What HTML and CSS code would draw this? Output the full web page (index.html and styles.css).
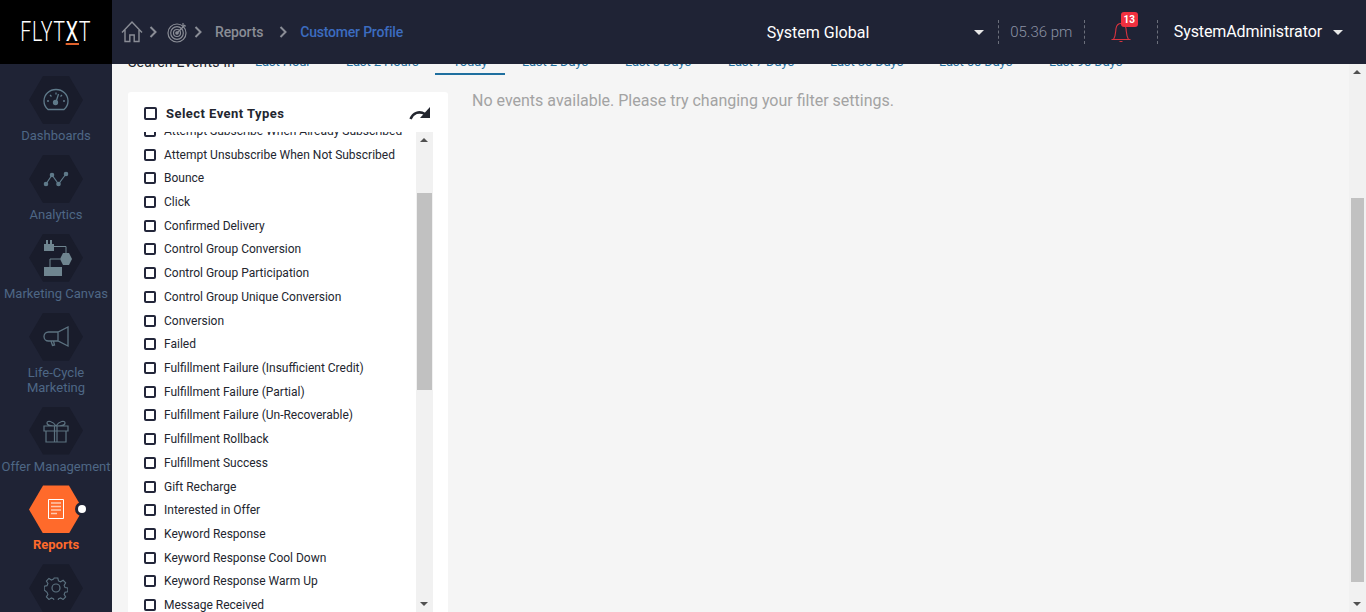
FILE: index.html
```html
<!DOCTYPE html>
<html lang="en">
<head>
    <meta charset="UTF-8">
    <title>Customer Profile</title>
    <link rel="stylesheet" href="styles.css">
</head>
<body>
    <header class="topbar">
        <div class="logo"><span class="logo-text">FLYT<span class="logo-x">X</span>T</span></div>
        <nav class="crumbs">
            <svg class="crumb-home" width="22" height="22" viewBox="0 0 22 22" fill="none" stroke="#8a8d96" stroke-width="1.400"><path d="M1 11.500 11 1l10 10.500M4 9v11.500h4.800v-6.500h4.400v6.500H18V9"/></svg>
            <svg class="chev" width="9" height="12" viewBox="0 0 9 12" fill="none" stroke="#8a8d96" stroke-width="2"><path d="M1.500 1 6.500 6l-5 5"/></svg>
            <svg class="crumb-target" width="21" height="21" viewBox="0 0 21 21" fill="none" stroke="#8a8d96" stroke-width="1.200"><circle cx="10" cy="11" r="9"/><circle cx="10" cy="11" r="6.300"/><circle cx="10" cy="11" r="3.500"/><circle cx="10" cy="11" r="1.200" fill="#8a8d96"/><path d="M10 11 18 3M16 1v3h3"/></svg>
            <svg class="chev" width="9" height="12" viewBox="0 0 9 12" fill="none" stroke="#8a8d96" stroke-width="2"><path d="M1.500 1 6.500 6l-5 5"/></svg>
            <span class="crumb-text">Reports</span>
            <svg class="chev chev-wide" width="9" height="12" viewBox="0 0 9 12" fill="none" stroke="#8a8d96" stroke-width="2"><path d="M1.500 1 6.500 6l-5 5"/></svg>
            <span class="crumb-current">Customer Profile</span>
        </nav>
        <div class="top-right">
            <div class="context">System Global</div>
            <span class="caret caret-context"></span>
            <div class="clock">05.36 pm</div>
            <div class="bell">
                <svg width="22" height="24" viewBox="0 0 22 24" fill="none" stroke="#d8333f" stroke-width="1.100"><path d="M1.500 19.500h19M3.500 19.500C6 15 5.500 12 6 8.500 6.500 5.500 8.500 3.500 11 3.500s4.500 2 5 5c.5 3.500 0 6.500 2.500 11M9.500 21.500h3"/></svg>
                <span class="badge">13</span>
            </div>
            <div class="user">SystemAdministrator</div>
            <span class="caret"></span>
        </div>
    </header>
    <div class="layout">
        <aside class="sidebar">
            <a class="side-item">
                <span class="hex"><svg width="26" height="24" viewBox="0 0 26 24" fill="none" stroke="#5f7a8a" stroke-width="1.300"><path d="M5 21.500C2.500 19.500 1 16.500 1 13 1 6.500 6.500 1.500 13 1.500S25 6.500 25 13c0 3.500-1.500 6.500-4 8.500zM4 13h2M20 13h2M7 7l1.500 1.500M19 7l-1.500 1.500M13 4.500v2"/><circle cx="12.500" cy="14.500" r="2" fill="#5f7a8a"/><path d="M13 14l2.500-8"/></svg></span>
                <span class="side-label">Dashboards</span>
            </a>
            <a class="side-item">
                <span class="hex"><svg width="26" height="16" viewBox="0 0 26 16" fill="#5f7a8a" stroke="#5f7a8a" stroke-width="1.200"><path d="M3 13 9 4l6.500 9L23 3" fill="none"/><circle cx="3" cy="13" r="1.700"/><circle cx="9" cy="4" r="1.700"/><circle cx="15.500" cy="13" r="1.700"/><circle cx="23" cy="3" r="1.700"/></svg></span>
                <span class="side-label">Analytics</span>
            </a>
            <a class="side-item">
                <span class="hex"><svg width="32" height="40" viewBox="0 0 32 40" fill="#6f8590"><path d="M6 2h2v4h2V2h2v4h2v7H4V6h2z"/><path d="M14 8.500h12V16M20 21H10v8" fill="none" stroke="#6f8590"/><path d="M23 15h6l3 6-3 6h-6l-3-6z"/><path d="M4 29h18v9H4z"/></svg></span>
                <span class="side-label">Marketing Canvas</span>
            </a>
            <a class="side-item">
                <span class="hex"><svg width="26" height="22" viewBox="0 0 26 22" fill="none" stroke="#5c7280" stroke-width="1.300"><path d="M25 1v19l-10-5H5.500a4.500 4.500 0 0 1 0-9H15zM15 6v9M8 15l1.500 4.500 2-.5-1-4"/></svg></span>
                <span class="side-label">Life-Cycle<br>Marketing</span>
            </a>
            <a class="side-item">
                <span class="hex"><svg width="26" height="24" viewBox="0 0 26 24" fill="none" stroke="#5c7280" stroke-width="1.200"><path d="M1 7h24v5H1zM3 12v11h20V12M14 7v16M11.500 7v16M13 7c3-5 9-6 9-3s-5 3-9 3c-4 0-9 0-9-3s6-2 9 3"/></svg></span>
                <span class="side-label">Offer Management</span>
            </a>
            <a class="side-item side-active">
                <span class="hex"><svg width="16" height="20" viewBox="0 0 16 20" fill="none" stroke="#fff"><path d="M.5.500h15v19H.5z"/><path d="M3 4h10M3 7.500h10M3 11h10M3 14.500h6" stroke="#ffc9b0" stroke-width="1.500"/></svg></span>
                <span class="active-dot"></span>
                <span class="side-label">Reports</span>
            </a>
            <a class="side-item">
                <span class="hex"><svg width="24" height="24" viewBox="0 0 24 24" fill="none" stroke="#5c7280" stroke-width="1.200"><path d="M10 1h4l.7 3.200 2.300 1 2.800-1.700 2.800 2.800-1.700 2.800 1 2.300 3.100.6v4l-3.100.7-1 2.300 1.700 2.800-2.800 2.800-2.800-1.700-2.300 1-.7 3.100h-4l-.7-3.100-2.300-1-2.800 1.700-2.800-2.800 1.700-2.800-1-2.300L-1 14v-4l3.100-.6 1-2.300-1.700-2.800 2.800-2.800 2.800 1.700 2.300-1z" transform="translate(1.100 1.100) scale(.91)"/><circle cx="12" cy="12" r="4"/></svg></span>
            </a>
        </aside>
        <main class="main">
            <div class="page">
                <div class="tabs">
                    <span class="tabs-title">Search Events in</span>
                    <a class="tab tab-hour">Last Hour</a>
                    <a class="tab tab-2h">Last 2 Hours</a>
                    <a class="tab tab-active">Today</a>
                    <a class="tab tab-2d">Last 2 Days</a>
                    <a class="tab tab-3d">Last 3 Days</a>
                    <a class="tab tab-7d">Last 7 Days</a>
                    <a class="tab tab-30d">Last 30 Days</a>
                    <a class="tab tab-60d">Last 60 Days</a>
                    <a class="tab">Last 90 Days</a>
                </div>
                <div class="content">
                    <section class="filter">
                        <div class="filter-head">
                            <span class="box box-head"></span>
                            <span class="filter-title">Select Event Types</span>
                            <svg class="reset" width="21" height="13" viewBox="0 0 21 13" fill="#23262f"><path d="M1.500 12C4 6 10 3.500 16 7" fill="none" stroke="#23262f" stroke-width="2.500"/><path d="M21 0v11H11z"/></svg>
                        </div>
                        <div class="filter-body">
                            <ul class="events">
                                <li><span class="box"></span>Attempt Subscribe When Already Subscribed</li>
                                <li><span class="box"></span>Attempt Unsubscribe When Not Subscribed</li>
                                <li><span class="box"></span>Bounce</li>
                                <li><span class="box"></span>Click</li>
                                <li><span class="box"></span>Confirmed Delivery</li>
                                <li><span class="box"></span>Control Group Conversion</li>
                                <li><span class="box"></span>Control Group Participation</li>
                                <li><span class="box"></span>Control Group Unique Conversion</li>
                                <li><span class="box"></span>Conversion</li>
                                <li><span class="box"></span>Failed</li>
                                <li><span class="box"></span>Fulfillment Failure (Insufficient Credit)</li>
                                <li><span class="box"></span>Fulfillment Failure (Partial)</li>
                                <li><span class="box"></span>Fulfillment Failure (Un-Recoverable)</li>
                                <li><span class="box"></span>Fulfillment Rollback</li>
                                <li><span class="box"></span>Fulfillment Success</li>
                                <li><span class="box"></span>Gift Recharge</li>
                                <li><span class="box"></span>Interested in Offer</li>
                                <li><span class="box"></span>Keyword Response</li>
                                <li><span class="box"></span>Keyword Response Cool Down</li>
                                <li><span class="box"></span>Keyword Response Warm Up</li>
                                <li><span class="box"></span>Message Received</li>
                            </ul>
                            <div class="scrollbar scrollbar-list">
                                <span class="arrow-up"></span>
                                <span class="thumb"></span>
                                <span class="arrow-down"></span>
                            </div>
                        </div>
                    </section>
                    <p class="empty">No events available. Please try changing your filter settings.</p>
                </div>
            </div>
            <div class="scrollbar scrollbar-page">
                <span class="arrow-up"></span>
                <span class="thumb"></span>
                <span class="arrow-down"></span>
            </div>
        </main>
    </div>
</body>
</html>
```
FILE: styles.css
```css
* {
    box-sizing: border-box;
}
html, body {
    height: 100%;
}
body {
    margin: 0;
    font-family: Roboto, "Liberation Sans", sans-serif;
    background-color: #f5f5f5;
    overflow: hidden;
}
.topbar {
    display: flex;
    align-items: center;
    height: 64px;
    background-color: #1f2335;
}
.logo {
    flex: none;
    width: 112px;
    height: 64px;
    line-height: 64px;
    text-align: center;
    background-color: #000;
    color: #fff;
    font-size: 28px;
    font-weight: 300;
}
.logo-text {
    display: inline-block;
    line-height: 22px;
    letter-spacing: 1px;
    transform: scaleX(.7);
}
.logo-x {
    display: inline-block;
    font-weight: 400;
    border-bottom: 2px solid #e0622b;
}
.crumbs {
    display: flex;
    align-items: center;
    padding-left: 9px;
}
.chev {
    margin-left: 6px;
}
.crumb-target {
    margin-left: 9px;
}
.crumb-text {
    margin-left: 12px;
    font-size: 14px;
    font-weight: 500;
    letter-spacing: -.15px;
    color: #8a8d96;
}
.chev-wide {
    margin-left: 16px;
}
.crumb-current {
    margin-left: 12px;
    font-size: 14px;
    font-weight: 500;
    letter-spacing: -.2px;
    color: #3c6cc0;
}
.top-right {
    display: flex;
    align-items: center;
    margin-left: auto;
    color: #fff;
    font-size: 16px;
}
.context {
    width: 196px;
}
.caret {
    display: inline-block;
    margin-left: 11px;
    margin-right: 23px;
    border-top: 5px solid #e8e8e8;
    border-left: 5px solid transparent;
    border-right: 5px solid transparent;
}
.caret-context {
    margin-right: 14px;
}
.clock {
    width: 87px;
    height: 24px;
    line-height: 24px;
    text-align: center;
    font-weight: 300;
    font-size: 15px;
    color: #8b92a4;
    border-left: 1px dashed #6b6f7b;
    border-right: 1px dashed #6b6f7b;
}
.bell {
    position: relative;
    width: 72px;
    height: 24px;
    text-align: center;
}
.badge {
    position: absolute;
    top: -8px;
    left: 36px;
    width: 17px;
    height: 15px;
    line-height: 15px;
    border-radius: 3px;
    background-color: #f0303f;
    font-size: 10px;
    font-weight: 700;
    text-align: center;
}
.user {
    height: 24px;
    line-height: 24px;
    padding-left: 16px;
    letter-spacing: -.1px;
    border-left: 1px dashed #6b6f7b;
}
.layout {
    display: flex;
    height: 548px;
}
.sidebar {
    flex: none;
    width: 112px;
    padding-top: 12px;
    background-color: #1f2335;
    overflow: hidden;
}
.side-item {
    position: relative;
    display: flex;
    flex-direction: column;
    align-items: center;
    margin-bottom: 11.9px;
}
.hex {
    position: relative;
    display: flex;
    align-items: center;
    justify-content: center;
    width: 54px;
    height: 48px;
}
.hex::before {
    content: "";
    position: absolute;
    inset: 0;
    background-color: #191c2b;
    clip-path: polygon(26% 0, 74% 0, 100% 50%, 74% 100%, 26% 100%, 0 50%);
}
.hex svg {
    position: relative;
}
.side-label {
    margin-top: 4px;
    font-size: 13px;
    line-height: 15px;
    text-align: center;
    white-space: nowrap;
    color: #4e6785;
}
.side-active .hex::before {
    background-color: #ff6a2b;
}
.side-active .side-label {
    font-weight: 700;
    color: #ff6a2b;
}
.active-dot {
    position: absolute;
    top: 20px;
    left: 78px;
    width: 8px;
    height: 8px;
    border-radius: 50%;
    background-color: #fff;
    box-shadow: 0 0 0 3px #1f2335;
}
.main {
    flex: 1;
    display: flex;
    min-width: 0;
}
.page {
    flex: 1;
    min-width: 0;
    padding-left: 16px;
    overflow: hidden;
}
.tabs {
    display: flex;
    height: 12px;
    margin-top: -11px;
    font-size: 13px;
    line-height: 18px;
    letter-spacing: -.1px;
    white-space: nowrap;
    color: #1f6f9f;
}
.tabs-title {
    width: 127px;
    font-size: 14px;
    letter-spacing: .3px;
    color: #23262f;
}
.tab {
    width: 91px;
}
.tab-2h {
    width: 89px;
}
.tab-active {
    width: 70px;
    height: 22px;
    text-align: center;
    border-bottom: 2px solid #1f6f9f;
}
.tab-2d {
    margin-left: 17px;
    width: 103px;
}
.tab-3d {
    width: 103px;
}
.tab-7d {
    width: 102px;
}
.tab-30d {
    width: 109px;
}
.tab-60d {
    width: 110px;
}
.content {
    display: flex;
    margin-top: 27px;
}
.filter {
    flex: none;
    width: 320px;
    height: 530px;
    background-color: #fff;
    border-radius: 3px 3px 0 0;
}
.filter-head {
    display: flex;
    align-items: center;
    height: 40px;
    padding: 3px 0 0 16px;
}
.box {
    flex: none;
    display: inline-block;
    width: 12px;
    height: 12px;
    border: 2px solid #23263a;
    border-radius: 2px;
    margin-right: 8px;
}
.box-head {
    width: 13px;
    height: 13px;
    margin-right: 9px;
}
.filter-title {
    font-size: 13px;
    font-weight: 700;
    letter-spacing: .45px;
    color: #23262f;
}
.reset {
    margin-left: auto;
    margin-right: 18px;
}
.filter-body {
    position: relative;
    height: 480px;
    overflow: hidden;
}
.events {
    list-style: none;
    margin: -13.07px 0 0;
    padding: 0 0 0 16px;
    font-size: 12px;
    color: #23262f;
}
.events li {
    display: flex;
    align-items: center;
    height: 23.72px;
    white-space: nowrap;
}
.scrollbar {
    flex: none;
    background-color: #f1f1f1;
}
.scrollbar-list {
    position: absolute;
    top: 0;
    right: 15px;
    width: 17px;
    height: 480px;
}
.scrollbar-page {
    position: relative;
    width: 17px;
}
.thumb {
    position: absolute;
    left: 2px;
    right: 2px;
    background-color: #c1c1c1;
}
.scrollbar-list .thumb {
    top: 61px;
    height: 197px;
    left: 1px;
    right: 1px;
}
.scrollbar-page .thumb {
    top: 134px;
    height: 384px;
}
.arrow-up, .arrow-down {
    position: absolute;
    left: 4px;
    border-left: 4px solid transparent;
    border-right: 4px solid transparent;
}
.arrow-up {
    top: 6px;
    border-bottom: 4px solid #505050;
}
.arrow-down {
    bottom: 6px;
    border-top: 4px solid #505050;
}
.empty {
    margin: -1px 0 0 24px;
    font-size: 16px;
    line-height: 20px;
    color: #a3a3a3;
}
```
